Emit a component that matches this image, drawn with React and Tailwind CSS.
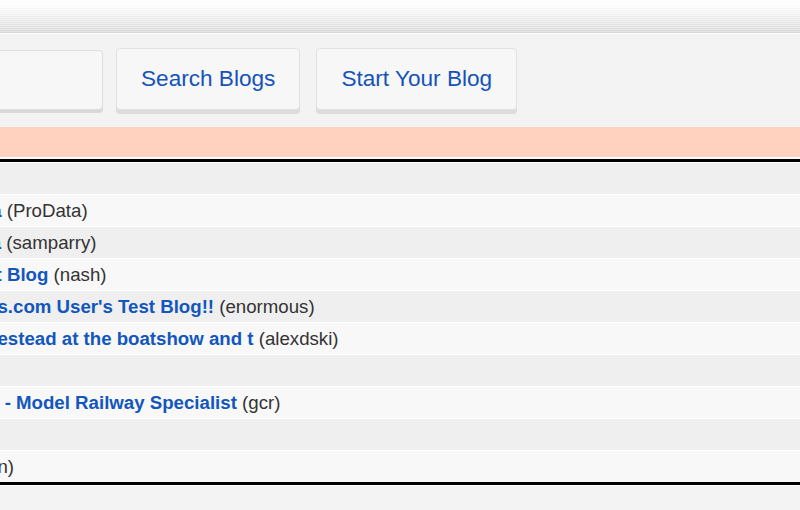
import React from 'react';

// Striped band across the top of the page, one 1px line per entry
const stripes = [
  'bg-[#ffffff]', 'bg-[#fefefe]', 'bg-[#fcfcfc]', 'bg-[#ffffff]', 'bg-[#fafafa]',
  'bg-[#ffffff]', 'bg-[#f8f8f8]', 'bg-[#fdfdfd]', 'bg-[#f6f6f6]', 'bg-[#fcfcfc]',
  'bg-[#f3f3f3]', 'bg-[#fbfbfb]', 'bg-[#f1f1f1]', 'bg-[#fafafa]', 'bg-[#eeeeee]',
  'bg-[#f8f8f8]', 'bg-[#ececec]', 'bg-[#f6f6f6]', 'bg-[#e9e9e9]', 'bg-[#f4f4f4]',
  'bg-[#e6e6e6]', 'bg-[#f2f2f2]', 'bg-[#e3e3e3]', 'bg-[#f0f0f0]', 'bg-[#e1e1e1]',
  'bg-[#eeeeee]', 'bg-[#dedede]', 'bg-[#ececec]', 'bg-[#dcdcdc]', 'bg-[#eaeaea]',
  'bg-[#d9d9d9]', 'bg-[#e4e4e4]', 'bg-[#d6d6d6]',
];

const blogs = [
  { title: '', user: '', lead: '' },
  { title: 'ProData', user: 'ProData', lead: '-ml-[70px]' },
  { title: "Sam's Agenda", user: 'samparry', lead: '-ml-[126px]' },
  { title: 'Nash Test Blog', user: 'nash', lead: '-ml-[86px]' },
  { title: "Blogs.com User's Test Blog!!", user: 'enormous', lead: '-ml-[44px]' },
  { title: 'Homestead at the boatshow and t', user: 'alexdski', lead: '-ml-[44px]' },
  { title: '', user: '', lead: '' },
  { title: 'GCR - Model Railway Specialist', user: 'gcr', lead: '-ml-[42px]' },
  { title: '', user: '', lead: '' },
  { title: '', user: 'kevin', lead: '-ml-[42px]' },
];

const App = () => {
  return (
    <div className="min-h-[510px] bg-[#f3f3f3] font-['Liberation_Sans',Arial,sans-serif] overflow-hidden">
      {/* Top stripes */}
      <div className="flex flex-col">
        {stripes.map((c, i) => (
          <div key={i} className={`h-[1px] ${c}`} />
        ))}
        <div className="h-[1px] bg-white" />
      </div>

      {/* Search toolbar */}
      <div className="flex items-start gap-[13px] pt-[14px] h-[93px]">
        <div className="-ml-[20px] mt-[2px] w-[123px] h-[60px] bg-[#f7f7f7] border border-[#dedede] rounded-[4px] shadow-[0_3px_0_#d8d8d8]" />
        <div className="flex gap-[16px]">
          <button className="h-[62px] px-[24px] bg-[#f7f7f7] border border-[#e2e2e2] rounded-[4px] shadow-[0_4px_0_#dcdcdc] text-[22.6px] text-[#1553b8] whitespace-nowrap">
            Search Blogs
          </button>
          <button className="h-[62px] px-[24px] bg-[#f7f7f7] border border-[#e2e2e2] rounded-[4px] shadow-[0_4px_0_#dcdcdc] text-[22.6px] text-[#1553b8] whitespace-nowrap">
            Start Your Blog
          </button>
        </div>
      </div>

      {/* Notice band */}
      <div className="h-[30px] bg-[#ffd2bf]" />
      <div className="h-[1px] bg-white" />
      <div className="h-[1px] bg-[#f3f3f3]" />

      {/* Blog table */}
      <div className="border-y-[3px] border-black bg-white">
        {blogs.map((b, i) => (
          <div
            key={i}
            className={`mt-[1px] h-[31px] flex items-center whitespace-nowrap text-[18.67px] ${
              i % 2 === 0 ? 'bg-[#efefef]' : 'bg-[#f8f8f8]'
            }`}
          >
            {b.user && (
              <span className={b.lead}>
                {b.title && <a className="font-bold text-[#1256be]">{b.title}</a>}
                {b.title ? ' ' : ''}
                <span className="text-[#333333]">({b.user})</span>
              </span>
            )}
          </div>
        ))}
      </div>
      <div className="h-[1px] bg-white" />
    </div>
  );
};

export default App;
